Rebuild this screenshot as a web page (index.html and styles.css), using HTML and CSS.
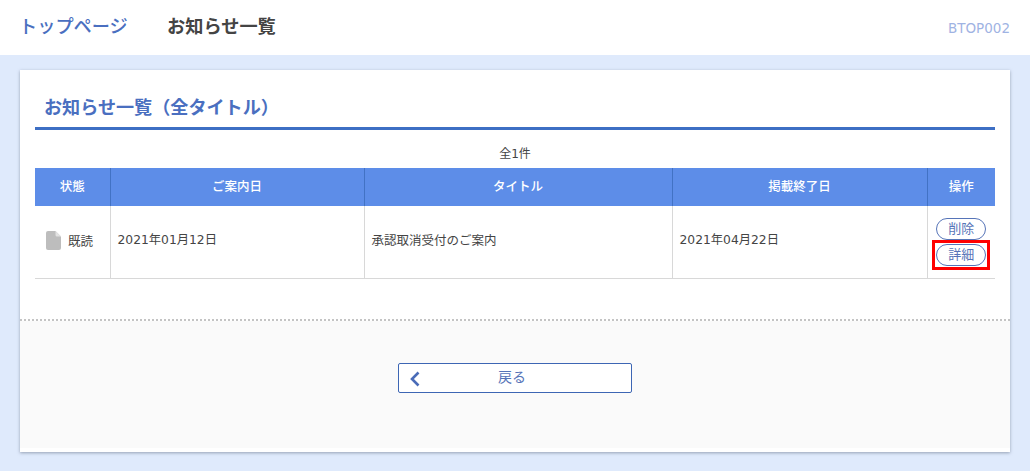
FILE: index.html
```html
<!DOCTYPE html>
<html lang="ja">
<head>
<meta charset="utf-8">
<title>お知らせ一覧</title>
<link rel="stylesheet" href="styles.css">
</head>
<body>
<header class="topbar">
  <a class="crumb-link">トップページ</a>
  <span class="crumb-current">お知らせ一覧</span>
  <span class="screen-id">BTOP002</span>
</header>
<main class="page">
  <section class="card">
    <div class="card-body">
      <h1 class="title">お知らせ一覧（全タイトル）</h1>
      <p class="count">全1件</p>
      <table class="list">
        <colgroup>
          <col class="c-state"><col class="c-date"><col class="c-title"><col class="c-end"><col class="c-op">
        </colgroup>
        <thead>
          <tr><th>状態</th><th>ご案内日</th><th>タイトル</th><th>掲載終了日</th><th>操作</th></tr>
        </thead>
        <tbody>
          <tr>
            <td class="state">
              <span class="state-in">
                <svg class="doc" viewBox="0 0 15 19" width="15" height="19"><path d="M2 0H9.500L15 5.500V17a2 2 0 0 1-2 2H2a2 2 0 0 1-2-2V2a2 2 0 0 1 2-2Z" fill="#bdbdbd"/><path d="M9.500 0V4a1.500 1.500 0 0 0 1.500 1.500H15Z" fill="#e2e2e2"/></svg>
                既読
              </span>
            </td>
            <td class="date">2021年01月12日</td>
            <td>承認取消受付のご案内</td>
            <td class="date">2021年04月22日</td>
            <td class="ops">
              <a class="pill">削除</a>
              <span class="marked"><a class="pill">詳細</a></span>
            </td>
          </tr>
        </tbody>
      </table>
    </div>
    <div class="card-foot">
      <a class="back">
        <svg class="chev" viewBox="0 0 10 16" width="10" height="16"><path d="M8.500 1.500 2 8l6.500 6.500" fill="none" stroke="#4a6cb8" stroke-width="2.600"/></svg>
        戻る
      </a>
    </div>
  </section>
</main>
</body>
</html>
```
FILE: styles.css
```css
* { box-sizing: border-box; }
html, body { margin: 0; padding: 0; }
body {
  width: 1030px;
  height: 471px;
  overflow: hidden;
  background: #dfeafc;
  color: #444;
  font-family: "DejaVu Sans", "Noto Sans CJK JP", sans-serif;
  font-size: 13px;
}
.topbar {
  height: 55px;
  background: #fff;
  display: flex;
  align-items: center;
  padding: 0 20px 5px 19px;
  font-family: "Liberation Sans", "Noto Sans CJK JP", sans-serif;
}
.crumb-link {
  color: #4a6fc0;
  font-size: 18.200px;
  width: 148px;
  font-weight: 500;
}
.crumb-current {
  color: #444;
  font-size: 18.200px;
  font-weight: 700;
}
.screen-id {
  margin-left: auto;
  color: #9fb3e3;
  font-family: "DejaVu Sans", sans-serif;
  font-size: 13.500px;
  padding-top: 5px;
}
.page { padding: 15px 20px 0; }
.card {
  height: 382px;
  background: #fff;
  box-shadow: 0 1px 3px rgba(90, 100, 120, .55);
  display: flex;
  flex-direction: column;
}
.card-body {
  height: 251px;
  padding: 0 15px;
  border-bottom: 2px dotted #c4c4c4;
}
.title {
  margin: 0;
  height: 60px;
  padding: 25px 0 0 9px;
  border-bottom: 3px solid #3d6fc4;
  color: #4a6fc0;
  font-size: 18.100px;
  line-height: 26px;
  font-weight: 700;
}
.count {
  margin: 0;
  height: 38px;
  padding-top: 15px;
  text-align: center;
  font-size: 12px;
  line-height: 18px;
}
.list {
  width: 960px;
  border-collapse: collapse;
  table-layout: fixed;
}
.c-state { width: 75px; }
.c-date { width: 254px; }
.c-title { width: 308px; }
.c-end { width: 255px; }
.c-op { width: 68px; }
.list th {
  height: 38px;
  padding: 0 0 4px;
  background: #5d8de8;
  color: #fff;
  font-size: 12.500px;
  font-weight: 500;
  border-left: 1px solid #4272c4;
}
.list th:first-child, .list td:first-child { border-left: 0; }
.list td {
  height: 72px;
  padding: 0 7px 5px;
  border-left: 1px solid #d8d8d8;
  border-bottom: 1px solid #d8d8d8;
  font-size: 12.500px;
}
.list td.date { font-size: 12.300px; }
.list td.state { padding: 0 0 3px 11px; }
.state-in { display: flex; align-items: center; gap: 7px; }
.doc { display: block; }
.list td.ops { padding: 12px 0 0; vertical-align: top; }
.pill {
  display: block;
  width: 50px;
  height: 22px;
  margin: 0 auto;
  border: 1px solid #5674b8;
  border-radius: 11px;
  color: #5674b8;
  background: #fff;
  font-size: 13px;
  line-height: 20px;
  text-align: center;
}
.marked {
  display: block;
  width: 58px;
  height: 30px;
  margin: 0 auto;
  padding: 1px;
  border: 3px solid #f00;
}
.card-foot {
  height: 127px;
  background: #fafafa;
  display: flex;
  justify-content: center;
  padding-top: 42px;
}
.back {
  width: 234px;
  height: 30px;
  position: relative;
  background: #fff;
  border: 1px solid #3d66b4;
  border-radius: 2px;
  color: #5674b8;
  font-size: 14px;
  line-height: 27px;
  text-align: center;
  padding-right: 6px;
}
.chev { position: absolute; left: 11px; top: 7px; }
```
